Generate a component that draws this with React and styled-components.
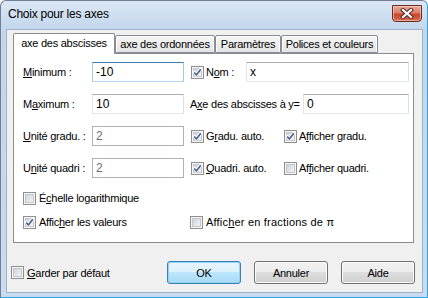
import React, { useId } from "react";
import styled, { createGlobalStyle } from "styled-components";

const Global = createGlobalStyle`
  html, body { margin: 0; padding: 0; background: #fff; }
  body { font-family: "Liberation Sans", Arial, sans-serif; font-size: 11px; color: #000; }
  * { box-sizing: border-box; }
`;

const Window = styled.div`
  width: 428px;
  height: 298px;
  display: flex;
  flex-direction: column;
  border-style: solid;
  border-width: 1px;
  border-color: #6f7f95 #2aa4e0 #2aa4e0 #6f7f95;
  border-radius: 6px 6px 0 0;
  padding: 0 4px 4px 5px;
  background: linear-gradient(to bottom, #dbe7f4 0px, #c3d6ec 28px, #c8dbef 100%);
  overflow: hidden;
`;

const TitleBar = styled.div`
  height: 28px;
  flex: none;
  display: flex;
  align-items: flex-start;
  justify-content: space-between;
  padding-left: 2px;
`;

const Title = styled.div`
  font-size: 12px;
  letter-spacing: -0.25px;
  line-height: 27px;
`;

const CloseBtn = styled.div`
  width: 30px;
  height: 17px;
  margin-top: 4px;
  margin-right: 1px;
  border: 1px solid #6d2a22;
  border-radius: 0 0 4px 4px;
  background: linear-gradient(to bottom, #e9a99b 0%, #d9806c 45%, #c7462c 55%, #d66a4f 100%);
  box-shadow: inset 0 0 0 1px rgba(255, 220, 210, 0.55);
  display: flex;
  align-items: center;
  justify-content: center;
`;

const Client = styled.div`
  flex: 1;
  border: 1px solid #9fb2c8;
  background: #f0f0f0;
  padding: 3px 7px 0 4px;
  display: flex;
  flex-direction: column;
`;

const TabStrip = styled.div`
  height: 20px;
  margin-left: 2px;
  display: flex;
  align-items: flex-end;
`;

const Tab = styled.div`
  position: relative;
  z-index: ${(p) => (p.$active ? 2 : 0)};
  width: ${(p) => p.$w}px;
  height: ${(p) => (p.$active ? 21 : 18)}px;
  margin-bottom: ${(p) => (p.$active ? -1 : 0)}px;
  border: 1px solid #898c95;
  border-bottom: ${(p) => (p.$active ? "none" : "1px solid #898c95")};
  border-radius: 2px 2px 0 0;
  background: ${(p) => (p.$active ? "#fff" : "linear-gradient(to bottom, #f7f7f7, #e4e4e4)")};
  box-shadow: ${(p) => (p.$active ? "none" : "inset 1px 1px 0 #fcfcfc, inset -1px 0 0 #fcfcfc")};
  display: flex;
  align-items: center;
  justify-content: center;
  letter-spacing: -0.25px;
  padding-bottom: ${(p) => (p.$active ? 2 : 0)}px;
  white-space: nowrap;
`;

const Panel = styled.div`
  position: relative;
  z-index: 1;
  width: 401px;
  height: 190px;
  margin-left: 2px;
  border: 1px solid #898c95;
  background: #fff;
  padding: 8px 0 0 9px;
  display: flex;
  flex-direction: column;
`;

const Row = styled.div`
  height: 20px;
  display: flex;
  align-items: center;
  margin-bottom: ${(p) => p.$mb ?? 12}px;
`;

const Label = styled.div`
  width: ${(p) => p.$w}px;
  margin-left: ${(p) => p.$ml || 0}px;
  flex: none;
  letter-spacing: -0.25px;
  white-space: nowrap;
`;

const Field = styled.div`
  width: ${(p) => p.$w}px;
  height: 20px;
  flex: none;
  border: 1px solid;
  border-color: ${(p) =>
    p.$focus
      ? "#3d7bad #a4c9e3 #b7d9ed #a4c9e3"
      : p.$disabled
      ? "#adb2b5"
      : "#abadb3 #dbdfe6 #e3e9ef #e2e3ea"};
  background: #fff;
  color: ${(p) => (p.$disabled ? "#6d6d6d" : "#000")};
  padding-left: 3px;
  font-size: 12px;
  line-height: 18px;
  white-space: nowrap;
`;

const CheckItem = styled.div`
  display: flex;
  align-items: center;
  gap: ${(p) => p.$gap ?? 3}px;
  width: ${(p) => (p.$w ? `${p.$w}px` : "auto")};
  margin-left: ${(p) => p.$ml || 0}px;
  flex: none;
  white-space: nowrap;
  letter-spacing: ${(p) => p.$ls ?? -0.25}px;
`;

const Key = styled.span`
  text-decoration: underline;
  text-underline-offset: 1px;
`;

const BottomRow = styled.div`
  margin-top: 18px;
  height: 23px;
  display: flex;
  align-items: center;
`;

const Button = styled.div`
  width: 74px;
  height: 23px;
  flex: none;
  margin-left: ${(p) => p.$ml || 0}px;
  border: 1px solid ${(p) => (p.$default ? "#3c7fb1" : "#707070")};
  border-radius: 3px;
  background: ${(p) =>
    p.$default
      ? "linear-gradient(to bottom, #eaf6fd 0%, #d9f0fc 50%, #bee6fd 50%, #a7d9f5 100%)"
      : "linear-gradient(to bottom, #f2f2f2 0%, #ebebeb 50%, #dddddd 50%, #cfcfcf 100%)"};
  box-shadow: ${(p) =>
    p.$default ? "inset 0 0 0 1px #8fd3fb" : "inset 0 0 0 1px #fcfcfc"};
  display: flex;
  align-items: center;
  justify-content: center;
  letter-spacing: -0.25px;
`;

function Check({ checked }) {
  const id = useId().replace(/:/g, "");
  return (
    <svg width="13" height="13" viewBox="0 0 13 13" style={{ flex: "none" }}>
      <defs>
        <linearGradient id={`g${id}`} x1="0" y1="0" x2="1" y2="1">
          <stop offset="0" stopColor="#cbcfd5" />
          <stop offset="1" stopColor="#f7f7f7" />
        </linearGradient>
      </defs>
      <rect x="0.5" y="0.5" width="12" height="12" fill="#f6f6f6" stroke="#8e8f8f" />
      <rect x="2.5" y="2.5" width="8" height="8" fill={`url(#g${id})`} stroke="#c3c6cb" />
      {checked && (
        <>
          <path d="M3.2 6.4 L5.4 9 L9.8 3.2" fill="none" stroke="#ffffff" strokeWidth="3" strokeLinecap="round" strokeLinejoin="round" />
          <path d="M3.2 6.4 L5.4 9 L9.8 3.2" fill="none" stroke="#4a5c8c" strokeWidth="1.6" strokeLinejoin="round" />
        </>
      )}
    </svg>
  );
}

export default function App() {
  return (
    <>
      <Global />
      <Window>
        <TitleBar>
          <Title>Choix pour les axes</Title>
          <CloseBtn>
            <svg width="14" height="11" viewBox="0 0 14 11">
              <path d="M3 2 L11 9 M11 2 L3 9" stroke="#5a2a24" strokeWidth="4.2" strokeLinecap="square" />
              <path d="M3 2 L11 9 M11 2 L3 9" stroke="#ffffff" strokeWidth="2.2" strokeLinecap="square" />
            </svg>
          </CloseBtn>
        </TitleBar>
        <Client>
          <TabStrip>
            <Tab $active $w={102}>axe des abscisses</Tab>
            <Tab $w={100}>axe des ordonnées</Tab>
            <Tab $w={66}>Paramètres</Tab>
            <Tab $w={97}>Polices et couleurs</Tab>
          </TabStrip>
          <Panel>
            <Row>
              <Label $w={69}><Key>M</Key>inimum :</Label>
              <Field $w={92} $focus>-10</Field>
              <CheckItem $w={55} $ml={7} $gap={2}>
                <Check checked />
                <span>N<Key>o</Key>m :</span>
              </CheckItem>
              <Field $w={163}>x</Field>
            </Row>
            <Row>
              <Label $w={69}>M<Key>a</Key>ximum :</Label>
              <Field $w={92}>10</Field>
              <Label $w={113} $ml={6}>A<Key>x</Key>e des abscisses à y=</Label>
              <Field $w={106}>0</Field>
            </Row>
            <Row>
              <Label $w={69}><Key>U</Key>nité gradu. :</Label>
              <Field $w={92} $disabled>2</Field>
              <CheckItem $w={93} $ml={7} $gap={2}>
                <Check checked />
                <span>G<Key>r</Key>adu. auto.</span>
              </CheckItem>
              <CheckItem $gap={2}>
                <Check checked />
                <span>A<Key>f</Key>ficher gradu.</span>
              </CheckItem>
            </Row>
            <Row>
              <Label $w={69}>U<Key>n</Key>ité quadri :</Label>
              <Field $w={92} $disabled>2</Field>
              <CheckItem $w={93} $ml={7} $gap={2}>
                <Check checked />
                <span><Key>Q</Key>uadri. auto.</span>
              </CheckItem>
              <CheckItem $gap={2}>
                <Check />
                <span>Af<Key>f</Key>icher quadri.</span>
              </CheckItem>
            </Row>
            <Row $mb={8}>
              <CheckItem>
                <Check />
                <span>É<Key>c</Key>helle logarithmique</span>
              </CheckItem>
            </Row>
            <Row>
              <CheckItem $w={167}>
                <Check checked />
                <span>Affic<Key>h</Key>er les valeurs</span>
              </CheckItem>
              <CheckItem $ls={0.2}>
                <Check />
                <span>Affic<Key>h</Key>er en fractions de π</span>
              </CheckItem>
            </Row>
          </Panel>
          <BottomRow>
            <CheckItem $w={156}>
              <Check />
              <span><Key>G</Key>arder par défaut</span>
            </CheckItem>
            <Button $default>OK</Button>
            <Button $ml={13}>Annuler</Button>
            <Button $ml={13}>Aide</Button>
          </BottomRow>
        </Client>
      </Window>
    </>
  );
}
